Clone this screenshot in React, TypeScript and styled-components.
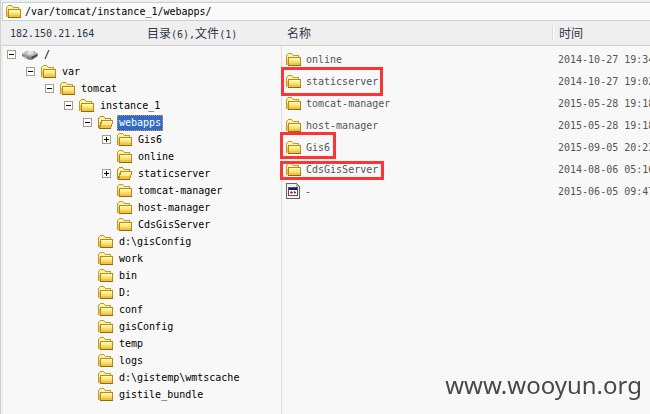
import React from "react";
import styled, { createGlobalStyle } from "styled-components";

const Global = createGlobalStyle`
  * { box-sizing: border-box; }
  body {
    margin: 0;
    background: #f8f8f8;
    font-family: "DejaVu Sans Mono", "Noto Sans CJK SC", monospace;
    font-size: 10px;
    color: #000;
  }
`;

const Page = styled.main`
  display: flex;
  flex-direction: column;
  min-height: 100vh;
  overflow: hidden;
  padding-top: 2px;
  border-left: 1px solid #d4d0c8;
  box-shadow: inset 2px 0 #efefef, inset 0 2px #efefef;
`;

const AddressBar = styled.label`
  display: flex;
  align-items: center;
  gap: 4px;
  height: 19px;
  margin-left: 1px;
  padding-left: 3px;
  background: #fafafa;
  border: 1px solid #c3d3d0;
  border-right: 0;
`;

const AddressInput = styled.input`
  flex: 1;
  min-width: 0;
  height: 17px;
  padding: 0;
  border: 0;
  outline: 0;
  background: transparent;
  font: inherit;
  line-height: 17px;
  color: inherit;
`;

const Panes = styled.div`
  display: grid;
  grid-template-columns: 279px minmax(0, 1fr);
  flex: 1;
  margin-left: 1px;
`;

const Pane = styled.section`
  min-width: 0;
`;

const FilePane = styled(Pane)`
  position: relative;
`;

const PaneHeader = styled.header`
  display: flex;
  align-items: center;
  height: 25px;
  padding-left: 8px;
  background: #efefef;
  border-bottom: 1px solid #cfcfcf;
  color: #2d3848;
`;

const Host = styled.span`
  width: 137px;
`;

const Cjk = styled.span`
  font-family: "Noto Sans CJK SC", sans-serif;
  font-size: 12px;
  line-height: 16px;
`;

const Tree = styled.ul`
  margin: 0;
  padding: 0;
  list-style: none;
`;

const TreeRow = styled.li<{ $level: number }>`
  display: flex;
  align-items: center;
  height: 17px;
  padding-left: ${(p) => 5 + p.$level * 19}px;
`;

const Toggle = styled.button`
  display: flex;
  width: 9px;
  height: 9px;
  padding: 0;
  border: 0;
  background: none;
`;

const ToggleSpace = styled.span`
  width: 9px;
`;

const TreeIcon = styled.span`
  display: flex;
  margin: 0 4px 0 6px;
`;

const TreeLabel = styled.span<{ $selected?: boolean }>`
  height: 16px;
  padding: 0 1px;
  line-height: 14px;
  border: 1px ${(p) => (p.$selected ? "dotted #d39a45" : "solid transparent")};
  background: ${(p) => (p.$selected ? "#316ac5" : "transparent")};
  color: ${(p) => (p.$selected ? "#fff" : "#000")};
  white-space: nowrap;
`;

const FileTable = styled.table`
  width: 100%;
  border-collapse: separate;
  border-spacing: 0;
  table-layout: fixed;
  color: #555;
`;

const HeadCell = styled.th`
  height: 25px;
  padding: 0 0 0 6px;
  background: #efefef;
  border-bottom: 1px solid #cfcfcf;
  color: #2d3848;
  font-weight: normal;
  text-align: left;
`;

const TimeHead = styled(HeadCell)`
  width: 97px;
  padding: 0;
`;

const HeadInner = styled.span`
  display: flex;
  align-items: center;
  height: 14px;
  padding-left: 5px;
  border-left: 1px solid #fff;
  box-shadow: -1px 0 #dadada;
`;

const Cell = styled.td`
  height: 22px;
  padding: 4px 0 0 5px;
  white-space: nowrap;
`;

const FileName = styled.span`
  display: flex;
  align-items: center;
  gap: 5px;
  height: 18px;
`;

const Mark = styled.span<{ $top: number; $left: number; $width: number; $height: number }>`
  position: absolute;
  top: ${(p) => p.$top}px;
  left: ${(p) => p.$left}px;
  width: ${(p) => p.$width}px;
  height: ${(p) => p.$height}px;
  border: 3px solid #fb3534;
`;

const PaneDivider = styled.span`
  position: absolute;
  top: 25px;
  bottom: 0;
  left: 0;
  width: 1px;
  background: #dedede;
`;

const Watermark = styled.span`
  position: fixed;
  right: 8px;
  bottom: 13px;
  font-family: "Noto Sans", sans-serif;
  font-size: 24px;
  line-height: 32px;
  color: #484848;
`;

const FolderIcon = () => (
  <svg width="15" height="13" viewBox="0 0 15 13" shapeRendering="crispEdges" aria-hidden="true">
    <path d="M0 2h1v-1h1v-1h4v1h1v1h6v2h2v9h-13v-1h-2z" fill="#c49a28" />
    <path d="M1 2h1v-1h4v1h1v1h5v1h-10v8h-1z" fill="#fff3a6" />
    <path d="M1 6h1v6h-1z" fill="#ecc84c" />
    <path d="M2 4h13v9h-13z" fill="#b78a16" />
    <path d="M3 5h11v7h-11z" fill="#fdee90" />
    <path d="M3 5h11v1h-11z" fill="#fffcc8" />
    <path d="M3 8h11v2h-11z" fill="#f9dc6c" />
    <path d="M3 10h11v2h-11z" fill="#efc445" />
    <path d="M2 12h13v1h-13z" fill="#93690a" />
  </svg>
);

const OpenFolderIcon = () => (
  <svg width="15" height="13" viewBox="0 0 15 13" shapeRendering="crispEdges" aria-hidden="true">
    <path d="M0 2h1v-1h1v-1h4v1h1v1h6v2h2v4h-1v3h-1v2h-12v-1h-1z" fill="#b88c1c" />
    <path d="M1 2h1v-1h4v1h1v1h5v1h-9v2h-1v3h-1z" fill="#fff3a6" />
    <path d="M4 5h10v3h-1v3h-1v1h-10v-1h1v-3h1z" fill="#fdee90" />
    <path d="M4 5h10v1h-10z" fill="#fffcc8" />
    <path d="M3 9h10v2h-1v1h-10v-1h1z" fill="#efc445" />
    <path d="M1 12h12v1h-12z" fill="#93690a" />
  </svg>
);

const DriveIcon = () => (
  <svg width="16" height="10" viewBox="0 0 16 10" aria-hidden="true">
    <path d="M0 4L5 1h7l4 3v2l-6 4h-3L0 6z" fill="#858585" />
    <path d="M0 4L5 1h7l4 3-7 3z" fill="#b8b8b8" />
    <path d="M4 3l3-2h4l1 2-4 2z" fill="#e2e2e2" />
    <path d="M9 7l6-3v2l-5 3z" fill="#4e4e4e" />
    <path d="M2 6l3 1" stroke="#aaa" />
  </svg>
);

const FileIcon = () => (
  <svg width="14" height="16" viewBox="0 0 14 16" shapeRendering="crispEdges" aria-hidden="true">
    <path d="M0 0h11v1h1v1h1v1h1v13h-14z" fill="#6a665e" />
    <path d="M1 1h9v3h3v11h-12z" fill="#f4f2ec" />
    <path d="M10 1h1v1h1v1h1v1h-3z" fill="#b9b6ae" />
    <path d="M2 4h10v9h-10z" fill="#55524c" />
    <path d="M3 5h8v7h-8z" fill="#fff" />
    <path d="M3 5h8v2h-8z" fill="#0a1a9c" />
    <path d="M4 9h1v-1h1v1h1v1h-1v1h-1v-1h-1z" fill="#e02020" />
    <path d="M8 8h1v1h1v1h-1v1h-1z" fill="#2038d0" />
    <path d="M8 10h1v1h-1z" fill="#1e9d3a" />
  </svg>
);

const BoxIcon = ({ plus }: { plus: boolean }) => (
  <svg width="9" height="9" viewBox="0 0 9 9" shapeRendering="crispEdges" aria-hidden="true">
    <path d="M0 0h9v9h-9z" fill="#a09f8c" />
    <path d="M1 1h7v7h-7z" fill="#fff" />
    <path d={plus ? "M2 4h5v1h-5zM4 2h1v5h-1z" : "M2 4h5v1h-5z"} fill="#000" />
  </svg>
);

type Node = { name: string; level: number; toggle?: "open" | "closed"; icon?: "drive" | "open"; selected?: boolean };

const nodes: Node[] = [
  { name: "/", level: 0, toggle: "open", icon: "drive" },
  { name: "var", level: 1, toggle: "open" },
  { name: "tomcat", level: 2, toggle: "open" },
  { name: "instance_1", level: 3, toggle: "open" },
  { name: "webapps", level: 4, toggle: "open", icon: "open", selected: true },
  { name: "Gis6", level: 5, toggle: "closed" },
  { name: "online", level: 5 },
  { name: "staticserver", level: 5, toggle: "closed", icon: "open" },
  { name: "tomcat-manager", level: 5 },
  { name: "host-manager", level: 5 },
  { name: "CdsGisServer", level: 5 },
  { name: "d:\\gisConfig", level: 4 },
  { name: "work", level: 4 },
  { name: "bin", level: 4 },
  { name: "D:", level: 4 },
  { name: "conf", level: 4 },
  { name: "gisConfig", level: 4 },
  { name: "temp", level: 4 },
  { name: "logs", level: 4 },
  { name: "d:\\gistemp\\wmtscache", level: 4 },
  { name: "gistile_bundle", level: 4 },
];

const files = [
  ["online", "2014-10-27 19:34"],
  ["staticserver", "2014-10-27 19:02"],
  ["tomcat-manager", "2015-05-28 19:18"],
  ["host-manager", "2015-05-28 19:18"],
  ["Gis6", "2015-09-05 20:23"],
  ["CdsGisServer", "2014-08-06 05:16"],
  ["-", "2015-06-05 09:47"],
];

const nodeIcon = (icon?: Node["icon"]) =>
  icon === "drive" ? <DriveIcon /> : icon === "open" ? <OpenFolderIcon /> : <FolderIcon />;

export default function App() {
  return (
    <>
      <Global />
      <Page>
        <AddressBar>
          <FolderIcon />
          <AddressInput aria-label="Path" defaultValue="/var/tomcat/instance_1/webapps/" />
        </AddressBar>
        <Panes>
          <Pane>
            <PaneHeader>
              <Host>182.150.21.164</Host>
              <span>
                <Cjk>目录</Cjk>(6),<Cjk>文件</Cjk>(1)
              </span>
            </PaneHeader>
            <Tree>
              {nodes.map((n) => (
                <TreeRow key={`${n.level}${n.name}`} $level={n.level}>
                  {n.toggle ? (
                    <Toggle aria-label={`Toggle ${n.name}`} aria-expanded={n.toggle === "open"}>
                      <BoxIcon plus={n.toggle === "closed"} />
                    </Toggle>
                  ) : (
                    <ToggleSpace />
                  )}
                  <TreeIcon>{nodeIcon(n.icon)}</TreeIcon>
                  <TreeLabel $selected={n.selected}>{n.name}</TreeLabel>
                </TreeRow>
              ))}
            </Tree>
          </Pane>
          <FilePane>
            <PaneDivider />
            <FileTable>
              <thead>
                <tr>
                  <HeadCell><Cjk>名称</Cjk></HeadCell>
                  <TimeHead>
                    <HeadInner><Cjk>时间</Cjk></HeadInner>
                  </TimeHead>
                </tr>
              </thead>
              <tbody>
                {files.map(([name, time]) => (
                  <tr key={name}>
                    <Cell>
                      <FileName>
                        {name === "-" ? <FileIcon /> : <FolderIcon />}
                        {name}
                      </FileName>
                    </Cell>
                    <Cell>{time}</Cell>
                  </tr>
                ))}
              </tbody>
            </FileTable>
            <Mark $top={46} $left={0} $width={102} $height={29} />
            <Mark $top={111} $left={-1} $width={56} $height={27} />
            <Mark $top={140} $left={-1} $width={104} $height={19} />
          </FilePane>
        </Panes>
        <Watermark>www.wooyun.org</Watermark>
      </Page>
    </>
  );
}
